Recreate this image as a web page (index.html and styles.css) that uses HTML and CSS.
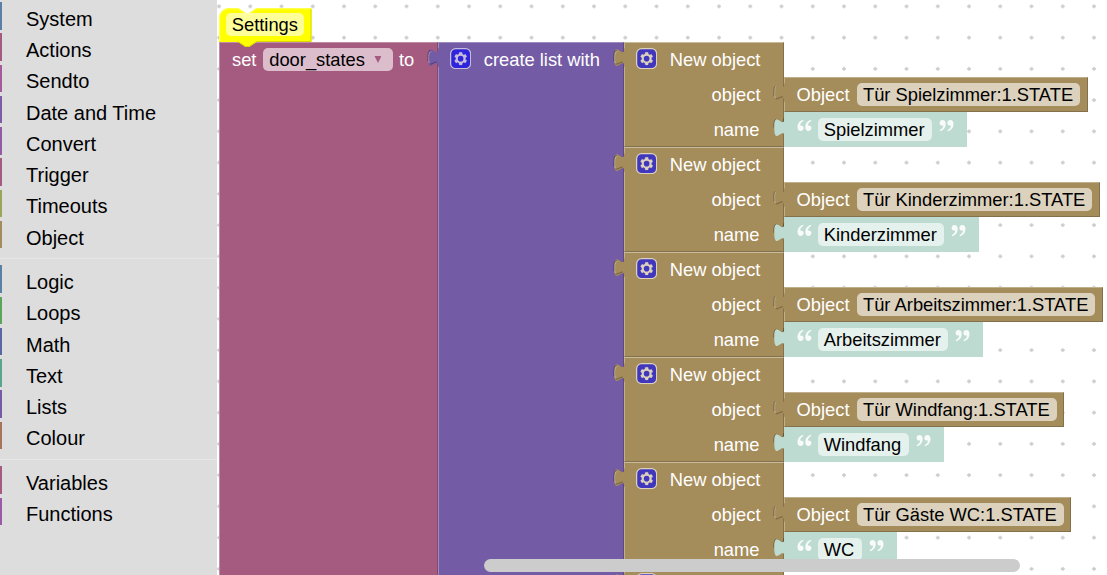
FILE: index.html
```html
<!DOCTYPE html>
<html lang="en">
<head>
<meta charset="utf-8">
<title>Blocks</title>
<link rel="stylesheet" href="styles.css">
</head>
<body>
<svg class="defs" aria-hidden="true">
  <symbol id="gear" viewBox="0 0 17 17">
    <g transform="translate(.5 .5)">
    <rect class="gear-box" width="16" height="16" rx="4"/>
    <path fill="#fff" stroke="#fff" stroke-width=".15" d="m4.203,7.296 0,1.368 -0.92,0.677 -0.11,0.41 0.9,1.559 0.41,0.11 1.043,-0.457 1.187,0.683 0.127,1.134 0.3,0.3 1.8,0 0.3,-0.299 0.127,-1.138 1.185,-0.682 1.046,0.458 0.409,-0.11 0.9,-1.559 -0.11,-0.41 -0.92,-0.677 0,-1.366 0.92,-0.677 0.11,-0.41 -0.9,-1.559 -0.409,-0.109 -1.046,0.458 -1.185,-0.682 -0.127,-1.138 -0.3,-0.299 -1.8,0 -0.3,0.3 -0.126,1.135 -1.187,0.682 -1.043,-0.457 -0.41,0.11 -0.899,1.559 0.108,0.409z"/>
    <circle cx="8" cy="8" r="2.25" fill="#00f"/>
    </g>
  </symbol>
  <symbol id="tab" viewBox="-9 4 10 17">
    <path d="M1,5H0c0,10 -8,-8 -8,7.5s8,-2.5 8,7.5H1z" fill="currentColor"/>
    <path class="tab-light" d="M-5.500,7.6C-7,7.6 -7.700,9.500 -7.700,12.500c0,2 .1,3.500 .5,4.300"/>
    <path class="tab-dark" d="M-8.300,15.500c0,-7 0,-8.700 2.500,-8.500"/>
    <path class="tab-dark" d="M-6.700,17.700c1.800,.3 3.500,-1.900 5.500,-1.700"/>
  </symbol>
  <symbol id="tab-flat" viewBox="-9 4 10 17">
    <path d="M1,5H0c0,10 -8,-8 -8,7.5s8,-2.5 8,7.5H1z" fill="currentColor"/>
    <path class="tab-light" d="M-6.800,7.8C-7.500,8.500 -7.700,10 -7.700,12.500c0,2 .1,3.500 .5,4.300"/>
    <path class="tab-dark" d="M-8.300,15.500c0,-5 0,-7 .8,-8"/>
    <path class="tab-dark" d="M-6.700,17.500c1.800,.3 3.500,-1.900 5.500,-1.700"/>
  </symbol>
  <symbol id="tab-plain" viewBox="-9 4 10 17">
    <path class="tab-dark" d="M-.4,5c0,10 -8,-8 -8,7.5"/>
    <path d="M1,5H0c0,10 -8,-8 -8,7.5s8,-2.5 8,7.5H1z" fill="currentColor"/>
  </symbol>
  <symbol id="quote" viewBox="0 0 15 13">
    <path fill="#fff" d="M6.2,.7C3,1.5 .5,4.2 .5,8c0,2.500 1.200,4 3.200,4c1.700,0 2.900,-1.200 2.900,-2.900c0,-1.600 -1.100,-2.700 -2.600,-2.700c-.5,0 -.8,.1 -1,.2c.2,-2 1.500,-3.700 3.500,-4.700z"/>
    <path fill="#fff" transform="translate(7.800)" d="M6.2,.7C3,1.5 .5,4.2 .5,8c0,2.500 1.200,4 3.200,4c1.700,0 2.900,-1.200 2.900,-2.900c0,-1.600 -1.100,-2.700 -2.600,-2.700c-.5,0 -.8,.1 -1,.2c.2,-2 1.500,-3.700 3.500,-4.700z"/>
  </symbol>
</svg>
<div class="app">
  <nav class="toolbox">
    <div class="category steel">System</div>
    <div class="category rose">Actions</div>
    <div class="category magenta">Sendto</div>
    <div class="category violet">Date and Time</div>
    <div class="category purple">Convert</div>
    <div class="category rose">Trigger</div>
    <div class="category olive">Timeouts</div>
    <div class="category tan">Object</div>
    <div class="separator"></div>
    <div class="category steel">Logic</div>
    <div class="category green">Loops</div>
    <div class="category indigo">Math</div>
    <div class="category teal">Text</div>
    <div class="category list">Lists</div>
    <div class="category brown">Colour</div>
    <div class="separator"></div>
    <div class="category rose">Variables</div>
    <div class="category orchid">Functions</div>
  </nav>
  <main class="workspace">
    <svg class="grid" width="890" height="575">
      <defs>
        <pattern id="dots" width="31.25" height="31.25" x="-13.6" y="-9.25" patternUnits="userSpaceOnUse">
          <path d="M13.8,15.625h3.65M15.625,13.8v3.65" stroke="#ccc" stroke-width="2"/>
        </pattern>
      </defs>
      <rect width="890" height="575" fill="url(#dots)"/>
    </svg>
    <div class="stack">
      <div class="comment">
        <svg class="comment-shape" width="94" height="41" viewBox="0 0 94 41">
          <path fill="#ff0" d="M0,10a10,10 0 0 1 10,-10H19l7.500,5h3.750l7.500,-5H92.500V34H37.750l-7.500,5h-3.750l-7.500,-5H0z"/>
          <path fill="none" stroke="#ffff4d" stroke-width="1.200" d="M.6,33V10a9.400,9.400 0 0 1 9.400,-9.400H19l7.500,5h3.750l7.500,-5H92"/>
          <path fill="none" stroke="#d6d600" d="M92,1V33.500H37.500l-7.500,5h-3.500l-7.500,-5"/>
        </svg>
        <span class="field">Settings</span>
      </div>
      <div class="set-block">
        <div class="set-head row">
          <span>set</span>
          <span class="field dropdown">door_states<i class="arrow"></i></span>
          <span>to</span>
        </div>
        <div class="list-block">
          <svg class="tab"><use href="#tab"/></svg>
          <div class="list-head row">
            <svg class="gear"><use href="#gear"/></svg>
            <span>create list with</span>
          </div>
          <div class="items">
            <div class="item">
              <div class="object-block">
                <svg class="tab"><use href="#tab"/></svg>
                <div class="row title"><svg class="gear"><use href="#gear"/></svg><span>New object</span></div>
                <div class="row">object</div>
                <div class="row name">name</div>
              </div>
              <div class="values">
                <div class="value id-block"><svg class="tab"><use href="#tab-flat"/></svg>Object<span class="field">Tür Spielzimmer:1.STATE</span></div>
                <div class="value text-block"><svg class="tab"><use href="#tab-plain"/></svg><svg class="quote"><use href="#quote"/></svg><span class="field">Spielzimmer</span><svg class="quote close"><use href="#quote"/></svg></div>
              </div>
            </div>
            <div class="item">
              <div class="object-block">
                <svg class="tab"><use href="#tab"/></svg>
                <div class="row title"><svg class="gear"><use href="#gear"/></svg><span>New object</span></div>
                <div class="row">object</div>
                <div class="row name">name</div>
              </div>
              <div class="values">
                <div class="value id-block"><svg class="tab"><use href="#tab-flat"/></svg>Object<span class="field">Tür Kinderzimmer:1.STATE</span></div>
                <div class="value text-block"><svg class="tab"><use href="#tab-plain"/></svg><svg class="quote"><use href="#quote"/></svg><span class="field">Kinderzimmer</span><svg class="quote close"><use href="#quote"/></svg></div>
              </div>
            </div>
            <div class="item">
              <div class="object-block">
                <svg class="tab"><use href="#tab"/></svg>
                <div class="row title"><svg class="gear"><use href="#gear"/></svg><span>New object</span></div>
                <div class="row">object</div>
                <div class="row name">name</div>
              </div>
              <div class="values">
                <div class="value id-block"><svg class="tab"><use href="#tab-flat"/></svg>Object<span class="field">Tür Arbeitszimmer:1.STATE</span></div>
                <div class="value text-block"><svg class="tab"><use href="#tab-plain"/></svg><svg class="quote"><use href="#quote"/></svg><span class="field">Arbeitszimmer</span><svg class="quote close"><use href="#quote"/></svg></div>
              </div>
            </div>
            <div class="item">
              <div class="object-block">
                <svg class="tab"><use href="#tab"/></svg>
                <div class="row title"><svg class="gear"><use href="#gear"/></svg><span>New object</span></div>
                <div class="row">object</div>
                <div class="row name">name</div>
              </div>
              <div class="values">
                <div class="value id-block"><svg class="tab"><use href="#tab-flat"/></svg>Object<span class="field">Tür Windfang:1.STATE</span></div>
                <div class="value text-block"><svg class="tab"><use href="#tab-plain"/></svg><svg class="quote"><use href="#quote"/></svg><span class="field">Windfang</span><svg class="quote close"><use href="#quote"/></svg></div>
              </div>
            </div>
            <div class="item">
              <div class="object-block">
                <svg class="tab"><use href="#tab"/></svg>
                <div class="row title"><svg class="gear"><use href="#gear"/></svg><span>New object</span></div>
                <div class="row">object</div>
                <div class="row name">name</div>
              </div>
              <div class="values">
                <div class="value id-block"><svg class="tab"><use href="#tab-flat"/></svg>Object<span class="field">Tür Gäste WC:1.STATE</span></div>
                <div class="value text-block"><svg class="tab"><use href="#tab-plain"/></svg><svg class="quote"><use href="#quote"/></svg><span class="field">WC</span><svg class="quote close"><use href="#quote"/></svg></div>
              </div>
            </div>
            <div class="item">
              <div class="object-block">
                <svg class="tab"><use href="#tab"/></svg>
                <div class="row title"><svg class="gear"><use href="#gear"/></svg></div>
              </div>
            </div>
          </div>
        </div>
      </div>
    </div>
    <div class="scrollbar"></div>
  </main>
</div>
</body>
</html>
```
FILE: styles.css
```css
* { box-sizing: border-box; }

body {
  margin: 0;
  overflow: hidden;
  background: #fff;
  font-family: "Liberation Sans", Arial, sans-serif;
}

.defs { position: absolute; width: 0; height: 0; }

.app { display: flex; width: 1107px; height: 575px; overflow: hidden; }

/* toolbox */
.toolbox {
  flex: none;
  width: 217px;
  padding-top: 2px;
  background: #ddd;
  color: #000;
  font-size: 20px;
}

.category {
  height: 27.5px;
  margin-bottom: 3.75px;
  padding: 3.75px 0 0 24px;
  border-left: 2px solid var(--hue);
  line-height: 27.5px;
  white-space: nowrap;
}

.separator {
  height: 7.25px;
  margin-bottom: 6.15px;
  border-bottom: 1px solid #e6e6e6;
}

.steel { --hue: #5b80a5; }
.rose { --hue: #a55b80; }
.magenta { --hue: #a55b99; }
.violet { --hue: #805ba5; }
.purple { --hue: #935ba5; }
.olive { --hue: #99a55b; }
.tan { --hue: #a58c5b; }
.green { --hue: #5ba55b; }
.indigo { --hue: #5b67a5; }
.teal { --hue: #5ba58c; }
.list { --hue: #745ba5; }
.brown { --hue: #a5745b; }
.orchid { --hue: #995ba5; }

/* workspace */
.workspace { position: relative; flex: 1; overflow: hidden; background: #fff; }
.grid { position: absolute; left: 0; top: 0; }

.stack {
  position: absolute;
  left: 2px;
  top: 8px;
  color: #fff;
  font-size: 18.33px;
  line-height: 24px;
  white-space: nowrap;
}

.field {
  height: 23px;
  padding: 0 6.25px;
  border-radius: 5px;
  background: rgba(255, 255, 255, .6);
  color: #000;
  line-height: 23px;
}

.row { display: flex; height: 35px; }

.comment {
  position: relative;
  z-index: 1;
  display: flex;
  height: 34px;
  padding: 5px 0 0 6.500px;
}
.comment .field { position: relative; height: 23px; }
.comment-shape { position: absolute; left: 0; top: 0; }

.set-block { display: flex; height: 560px; }
.set-head {
  width: 219px;
  gap: 6.5px;
  padding: 5px 0 0 12px;
  background: #a55b80;
  border: 1px solid;
  border-color: #c08ca6 #84496a #84496a #c08ca6;
}
.set-head, .list-head { height: 100%; }
.dropdown { display: flex; align-items: center; gap: 9.5px; width: 130px; margin-right: -.5px; }
.arrow {
  width: 7px;
  height: 7px;
  background: #a55b80;
  clip-path: polygon(0 0, 100% 0, 50% 100%);
}

.list-block { position: relative; display: flex; color: #745ba5; }
.list-block > .tab { left: -11px; top: 5px; }
.list-head {
  width: 186px;
  gap: 13px;
  padding: 5px 0 0 10.500px;
  color: #fff;
  background: #745ba5;
  border: 1px solid;
  border-color: #9e8cc0 #5d4984 #5d4984 #9e8cc0;
}

.gear { flex: none; width: 21.25px; height: 21.25px; opacity: .6; }
.gear-box { fill: #00f; stroke: #fff; stroke-width: 1; }

.item { display: flex; height: 105.1px; }

.object-block {
  position: relative;
  width: 160px;
  height: 105px;
  padding-right: 22.500px;
  color: #a58c5b;
  background: #a58c5b;
  border: 1px solid;
  border-color: #c9bb9d #84704a #84704a #c0af8c;
}
.object-block .row { justify-content: flex-end; padding-top: 5px; color: #fff; }
.object-block .title { justify-content: flex-start; gap: 13px; padding-left: 10.500px; margin-right: -20px; }
.object-block .name { padding-right: 1px; }

.tab {
  position: absolute;
  left: -12px;
  top: 4px;
  width: 12.500px;
  height: 21.25px;
}
.tab-dark { fill: none; stroke: #000; stroke-opacity: .3; stroke-width: .8; }
.tab-light { fill: none; stroke: #fff; stroke-opacity: .35; stroke-width: .8; }

.values { padding-top: 35px; }
.value { position: relative; display: flex; width: max-content; height: 35px; }
.value .tab { left: -11px; top: 5px; }
.id-block {
  gap: 7.500px;
  padding: 5px 6.5px 0 11.500px;
  background: #a58c5b;
  color: #fff;
  border: 1px solid;
  border-color: #c0af8c #84704a #84704a #c0af8c;
}
.id-block .field { padding: 0 7px 0 6px; }
.id-block .tab { left: -12px; top: 4px; color: #a58c5b; }
.text-block {
  gap: 6px;
  padding: 6px 13px 0 12.500px;
  background: #bddbd1;
}
.text-block .field { padding-right: 7.500px; }
.text-block .tab { color: #bddbd1; }
.quote { width: 15px; height: 13px; margin-top: 1px; opacity: .9; }
.close { margin-left: 1px; transform: rotate(180deg); }

.scrollbar {
  position: absolute;
  left: 267px;
  top: 559px;
  width: 536px;
  height: 13px;
  border-radius: 7px;
  background: #ccc;
}
```
